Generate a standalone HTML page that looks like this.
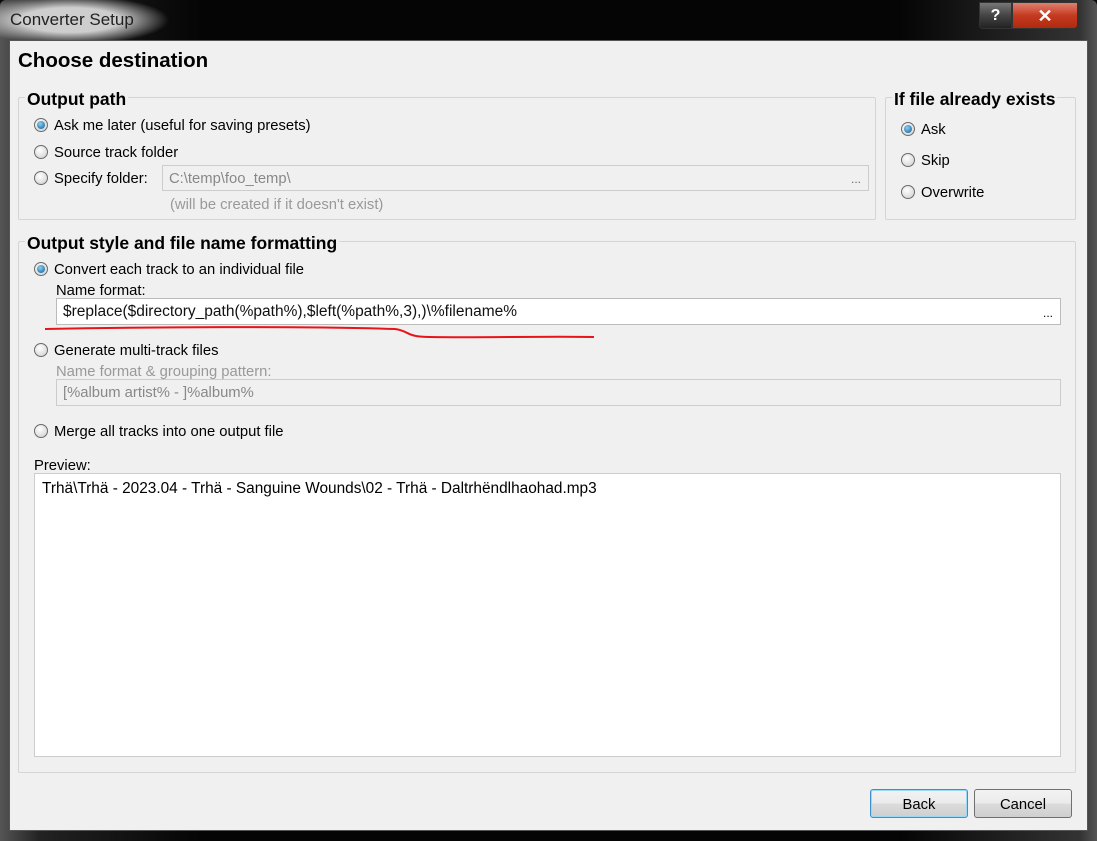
<!DOCTYPE html>
<html><head><meta charset="utf-8"><style>
*{box-sizing:border-box;margin:0;padding:0}
body{width:1097px;height:841px;background:#0a0a0a;position:relative;overflow:hidden;font-family:"Liberation Sans",sans-serif;font-size:14.8px;color:#000}
.a{position:absolute;white-space:nowrap;margin-top:2px}
.client{position:absolute;left:9px;top:40px;width:1079px;height:791px;background:#f0f0f0;border:1px solid #555}
.grp{position:absolute;border:1px solid #d5d5d5;border-radius:2px}
.gt{position:absolute;background:#f0f0f0;font-weight:bold;font-size:17.5px;padding:0 2px;line-height:18px;margin-top:1px}
.rad{position:absolute;width:14px;height:14px;border-radius:50%;border:1px solid #6a6a6a;background:radial-gradient(circle at 40% 35%,#fff,#ccc)}
.rad.on::after{content:"";position:absolute;left:2px;top:2px;width:8px;height:8px;border-radius:50%;background:radial-gradient(circle at 40% 35%,#8ad0f5,#0a5a90)}
.inp{position:absolute;border:1px solid #bbb;background:#fff;padding-left:6px;line-height:26px}
.dis{background:#f0f0f0;color:#888;border-color:#ccc}
.btn{position:absolute;height:29px;border:1px solid #707070;border-radius:3px;background:linear-gradient(#f2f2f2,#ebebeb 50%,#dcdcdc 50%,#cfcfcf);text-align:center;line-height:30px}
</style></head><body>
<div style="position:absolute;left:0;top:0;width:1097px;height:841px;background:linear-gradient(90deg,#555 0,#222 40px,#050505 200px,#050505 900px,#333 1080px,#555);border-radius:6px 6px 0 0"></div>
<div style="position:absolute;left:-30px;top:-5px;width:200px;height:50px;background:radial-gradient(ellipse at 50% 50%,rgba(215,215,215,.95) 35%,rgba(200,200,200,0) 70%)"></div>
<div class="a" style="left:10px;top:8px;font-size:17px;color:#222">Converter Setup</div>
<div class="a" style="left:979px;top:0px;width:33px;height:27px;border:1px solid #333;border-radius:0 0 0 4px;background:linear-gradient(#777,#444 50%,#222);color:#fff;font-weight:bold;font-size:16px;text-align:center;line-height:26px">?</div>
<div class="a" style="left:1012px;top:0px;width:66px;height:27px;border:1px solid #333;border-radius:0 0 4px 0;background:linear-gradient(#e08070,#c43a20 50%,#b02a10);color:#fff;font-weight:bold;font-size:18px;text-align:center;line-height:26px">✕</div>
<div class="client"></div>
<div class="a" style="left:18px;top:47px;font-weight:bold;font-size:20.5px">Choose destination</div>

<div class="grp" style="left:18px;top:97px;width:858px;height:123px"></div>
<div class="gt" style="left:25px;top:89px">Output path</div>
<div class="rad on" style="left:34px;top:118px"></div><div class="a" style="left:54px;top:116px">Ask me later (useful for saving presets)</div>
<div class="rad" style="left:34px;top:145px"></div><div class="a" style="left:54px;top:143px">Source track folder</div>
<div class="rad" style="left:34px;top:171px"></div><div class="a" style="left:54px;top:169px">Specify folder:</div>
<div class="inp dis" style="left:162px;top:165px;width:707px;height:26px">C:\temp\foo_temp\</div>
<div class="a" style="left:851px;top:170px;color:#666;font-size:12px">...</div>
<div class="a" style="left:170px;top:195px;color:#999">(will be created if it doesn't exist)</div>

<div class="grp" style="left:885px;top:97px;width:191px;height:123px"></div>
<div class="gt" style="left:892px;top:89px">If file already exists</div>
<div class="rad on" style="left:901px;top:122px"></div><div class="a" style="left:921px;top:120px">Ask</div>
<div class="rad" style="left:901px;top:153px"></div><div class="a" style="left:921px;top:151px">Skip</div>
<div class="rad" style="left:901px;top:185px"></div><div class="a" style="left:921px;top:183px">Overwrite</div>

<div class="grp" style="left:18px;top:241px;width:1058px;height:532px"></div>
<div class="gt" style="left:25px;top:233px">Output style and file name formatting</div>
<div class="rad on" style="left:34px;top:262px"></div><div class="a" style="left:54px;top:260px">Convert each track to an individual file</div>
<div class="a" style="left:56px;top:281px">Name format:</div>
<div class="inp" style="left:56px;top:298px;width:1005px;height:27px;color:#111;font-size:15.5px">$replace($directory_path(%path%),$left(%path%,3),)\%filename%</div>
<div class="a" style="left:1043px;top:304px;font-size:12px">...</div>
<svg style="position:absolute;left:0;top:0" width="1097" height="841"><path d="M45 329 C150 327 300 326 395 329 C410 331 405 337 430 337 C480 338 540 336 594 337" stroke="#e8141a" stroke-width="2" fill="none"/></svg>
<div class="rad" style="left:34px;top:343px"></div><div class="a" style="left:54px;top:341px">Generate multi-track files</div>
<div class="a" style="left:56px;top:362px;color:#999">Name format &amp; grouping pattern:</div>
<div class="inp dis" style="left:56px;top:379px;width:1005px;height:27px">[%album artist% - ]%album%</div>
<div class="rad" style="left:34px;top:424px"></div><div class="a" style="left:54px;top:422px">Merge all tracks into one output file</div>
<div class="a" style="left:34px;top:456px">Preview:</div>
<div class="inp" style="left:34px;top:473px;width:1027px;height:284px;line-height:30px;padding-left:7px;border-color:#ccc;font-size:15.4px">Trhä\Trhä - 2023.04 - Trhä - Sanguine Wounds\02 - Trhä - Daltrhëndlhaohad.mp3</div>

<div class="btn" style="left:870px;top:789px;width:98px;border-color:#3c8fc8;box-shadow:inset 0 0 0 1px #9ad8f5">Back</div>
<div class="btn" style="left:974px;top:789px;width:98px">Cancel</div>
</body></html>
